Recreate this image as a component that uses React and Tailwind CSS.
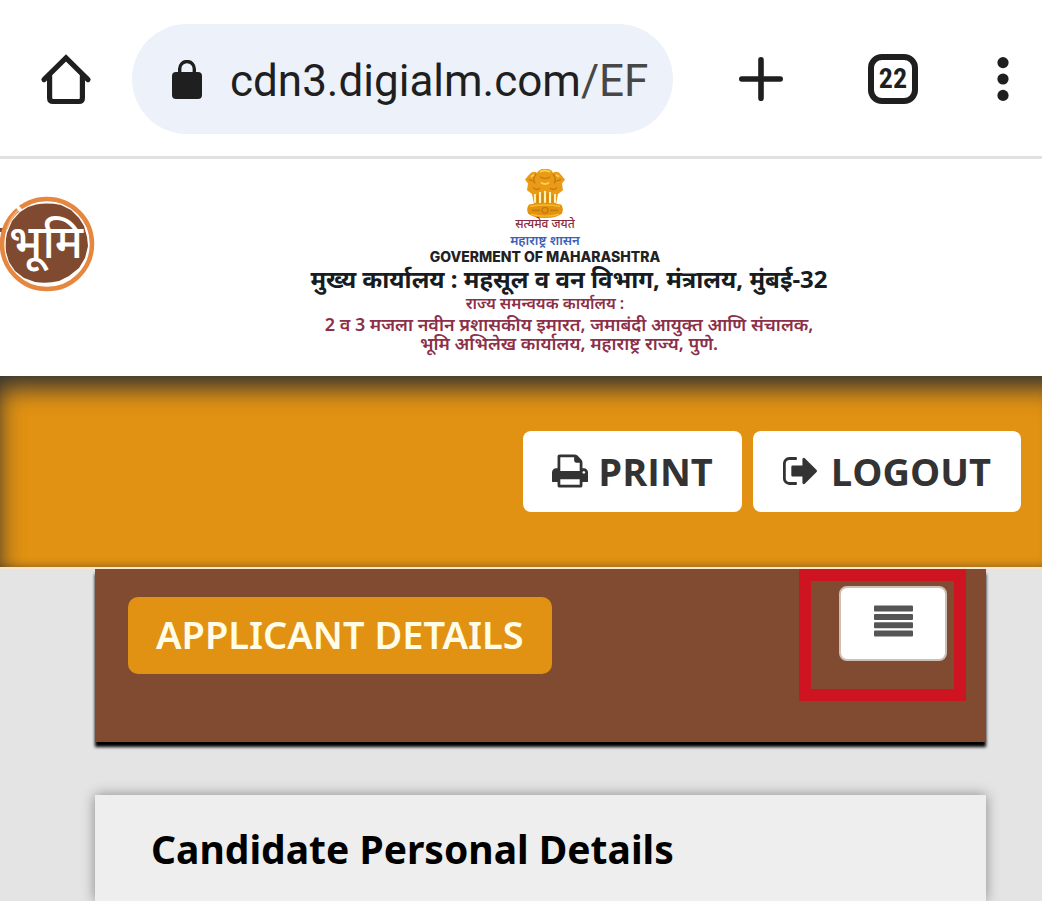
function HomeIcon() {
  return (
    <svg viewBox="0 0 52 52" className="size-13" fill="none" stroke="#1f1f1f" strokeWidth="5.2" strokeLinecap="round" strokeLinejoin="miter" aria-hidden="true">
      <path d="M4 26.600 26 5l22 21.600" />
      <path d="M9.600 23v22q0 3.500 3.500 3.500h25.800q3.500 0 3.500-3.500V23" />
    </svg>
  );
}

function LockIcon() {
  return (
    <svg viewBox="0 0 30 39" className="h-[39px] w-[30px]" aria-hidden="true">
      <rect x="0" y="12" width="30" height="27" rx="4" fill="#1f1f1f" />
      <path d="M7.7 14V8.8a7.3 7.3 0 0 1 14.6 0V14" fill="none" stroke="#1f1f1f" strokeWidth="3.4" />
    </svg>
  );
}

function PlusIcon() {
  return (
    <svg viewBox="0 0 44 44" className="size-11" stroke="#1f1f1f" strokeWidth="5.6" strokeLinecap="round" aria-hidden="true">
      <path d="M22 2.8v38.4M2.8 22h38.4" />
    </svg>
  );
}

function DotsIcon() {
  return (
    <svg viewBox="0 0 12 44" className="h-11 w-3" fill="#1f1f1f" aria-hidden="true">
      <circle cx="6" cy="5.6" r="5.6" />
      <circle cx="6" cy="22" r="5.6" />
      <circle cx="6" cy="38.4" r="5.6" />
    </svg>
  );
}

function PrintIcon() {
  return (
    <svg viewBox="0 128 1664 1536" className="h-[34px] w-9" fill="currentColor" aria-hidden="true">
      <path d="M384 1536h896v-256h-896v256zM384 896h896v-384h-160q-40 0-68-28t-28-68v-160h-640v640zM1536 960q0-26-19-45t-45-19-45 19-19 45 19 45 45 19 45-19 19-45zM1664 960v416q0 13-9.5 22.5t-22.5 9.5h-224v160q0 40-28 68t-68 28h-960q-40 0-68-28t-28-68v-160h-224q-13 0-22.5-9.5t-9.5-22.5v-416q0-79 56.5-135.5t135.5-56.5h64v-544q0-40 28-68t68-28h672q40 0 88 20t76 48l152 152q28 28 48 76t20 88v256h64q79 0 135.5 56.5t56.5 135.5z" />
    </svg>
  );
}

function LogoutIcon() {
  return (
    <svg viewBox="0 256 1568 1280" className="h-7 w-[34px]" fill="currentColor" aria-hidden="true">
      <path d="M640 1440q0 4 1 20t.5 26.5-3 23.5-10 19.5-20.5 6.5h-320q-119 0-203.5-84.5t-84.5-203.5v-704q0-119 84.5-203.5t203.5-84.5h320q13 0 22.5 9.5t9.5 22.5q0 4 1 20t.5 26.5-3 23.5-10 19.5-20.5 6.5h-320q-66 0-113 47t-47 113v704q0 66 47 113t113 47h312l11.5 1 11.5 3 8 5.5 7 9 2 13.5zM1568 896q0 26-19 45l-544 544q-19 19-45 19t-45-19-19-45v-288h-448q-26 0-45-19t-19-45v-384q0-26 19-45t45-19h448v-288q0-26 19-45t45-19 45 19l544 544q19 19 19 45z" />
    </svg>
  );
}

function MenuIcon() {
  return (
    <svg viewBox="0 0 39 32" className="h-8 w-[39px]" fill="#555" aria-hidden="true">
      <rect y="0.5" width="39" height="6" rx="1" />
      <rect y="9" width="39" height="6" rx="1" />
      <rect y="17.3" width="39" height="6" rx="1" />
      <rect y="25.5" width="39" height="6" rx="1" />
    </svg>
  );
}

function BhumiLogo() {
  return (
    <div className="grid w-24 grid-cols-1 grid-rows-1 items-center justify-items-center">
      <svg viewBox="0 0 96 98" className="col-start-1 row-start-1 h-[98px] w-24" aria-hidden="true">
        <path d="M0 33h5v4H0z" fill="#804a30" />
        <circle cx="47" cy="49" r="45" fill="#fff" stroke="#e5873f" strokeWidth="4.500" />
        <path d="M7 34Q12 19 20 14" stroke="#f3b27c" strokeWidth="1.500" fill="none" />
        <path d="m15 9 8 9" stroke="#fff" strokeWidth="3.500" />
        <path d="M36 9.500q12-2 25 .5l10 5 8 8 5 8 3 11 1 9-3 12-6 10-10 8-10 5q-12 3-24 1l-11-4-9-7-6-9-3-10q-1-11 1-19l5-12 8-9 8-5Z" fill="#804a30" />
      </svg>
      <span className="col-start-1 row-start-1 pr-1 pb-2 font-['Noto_Sans','Noto_Sans_Devanagari',sans-serif] text-[46px] leading-none font-medium text-white">भूमि</span>
    </div>
  );
}

function Emblem() {
  return (
    <svg viewBox="0 0 42 52" className="h-[50px] w-[42px]" preserveAspectRatio="none" aria-hidden="true">
      <path d="M5 6Q9 1 13 4q3-5 8-4 6-1 8 4 5-3 8 2l4 5-3 4 1 7-5 4-2 11H10L8 26l-5-4 1-7-3-4Z" fill="#e99a16" />
      <path d="M12 5q-4 6-1 10m18-10q4 6 1 10M16 8q5 4 10 0M5 11l6 2m20 0 6-2M9 19q3 4 7 1m10 0q4 3 7-1" fill="none" stroke="#c67a10" strokeWidth="1.300" />
      <path d="M16 3q5-3 10 0M7 8l3-2m22 0 3 2M17 14q4 3 8 0" fill="none" stroke="#ffcf45" strokeWidth="2" />
      <path d="M11 26v9m5-11v12m5-13v13m5-12v12m5-10v9" stroke="#fff2b5" strokeWidth="2" />
      <path d="M13.500 27v9m5-11v11m5-11v11m5-9v9" stroke="#d08a1b" strokeWidth="1.500" />
      <path d="M5 37q16-4 32 0 3 4 1 9-4 5-17 5T4 46q-2-5 1-9Z" fill="#e3930d" />
      <path d="M6 39q15-3 30 0M7 47q14 4 28 0" fill="none" stroke="#f6b930" strokeWidth="1.500" />
      <circle cx="21" cy="43" r="3" fill="none" stroke="#bd7714" strokeWidth="1.200" />
      <path d="M8 43h8m10 0h8" stroke="#c67d14" strokeWidth="2" />
    </svg>
  );
}

export default function App() {
  return (
    <div className="flex min-h-screen flex-col bg-[#e4e4e4] font-['Open_Sans','Noto_Sans',sans-serif]">
      <header className="flex h-[159px] items-center border-b-3 border-[#e0e2e0] bg-white pt-0.5 pr-[33px] pl-10">
        <button type="button" aria-label="Home" className="shrink-0"><HomeIcon /></button>
        <div className="ml-10 flex h-[110px] min-w-0 flex-1 items-center overflow-hidden rounded-full bg-[#ecf1fa] pr-5 pl-10">
          <LockIcon />
          <span className="ml-7 pt-1 font-[Roboto,sans-serif] text-[44px] leading-none whitespace-nowrap text-[#1f1f1f]">
            cdn3.digialm.com<span className="text-[#474747]">/EF</span>
          </span>
        </div>
        <button type="button" aria-label="New tab" className="ml-[66px] shrink-0"><PlusIcon /></button>
        <button type="button" aria-label="Open tabs" className="ml-[85px] flex size-[50px] shrink-0 items-center justify-center rounded-[14px] border-6 border-[#1f1f1f] font-['Liberation_Sans_Narrow','Roboto_Condensed',Roboto,sans-serif] text-[28px] leading-none font-bold text-[#1f1f1f]">22</button>
        <button type="button" aria-label="More options" className="ml-[79px] shrink-0"><DotsIcon /></button>
      </header>

      <section className="flex h-[217px] items-start bg-white">
        <div className="mt-9"><BhumiLogo /></div>
        <div className="flex min-w-0 flex-1 flex-col items-center pt-2.5 font-['Noto_Sans','Noto_Sans_Devanagari',sans-serif] whitespace-nowrap">
          <div className="flex flex-col items-center pr-12">
            <Emblem />
            <p className="text-[12px] leading-[10px] font-medium text-[#8b2942]">सत्यमेव जयते</p>
            <p className="pt-1.5 text-[13px] leading-[10px] font-semibold text-[#3a62b5]">महाराष्ट्र शासन</p>
            <h1 className="pt-1.5 font-[Inter,sans-serif] text-[14px] leading-[12px] font-extrabold text-[#222]">GOVERMENT OF MAHARASHTRA</h1>
          </div>
          <p className="text-[24px] leading-[32px] font-bold text-[#161c22]">मुख्य कार्यालय : महसूल व वन विभाग, मंत्रालय, मुंबई-32</p>
          <p className="pr-12 text-[16px] leading-[16px] font-semibold text-[#8b3048]">राज्य समन्वयक कार्यालय :</p>
          <p className="pt-1 text-[18px] leading-[18px] font-semibold text-[#8b3048]">2 व 3 मजला नवीन प्रशासकीय इमारत, जमाबंदी आयुक्त आणि संचालक,</p>
          <p className="text-[18px] leading-[20px] font-semibold text-[#8b3048]">भूमि अभिलेख कार्यालय, महाराष्ट्र राज्य, पुणे.</p>
        </div>
      </section>

      <nav className="flex h-[191px] items-center justify-end gap-[11px] bg-[#e29212] pr-[21px] text-[38px] leading-none font-bold text-[#333] shadow-[inset_12px_25px_24px_-13px_#333,inset_0_-8px_10px_-8px_#3339]">
        <button type="button" className="flex h-[81px] items-center gap-2.5 rounded-lg bg-white px-[29px] pb-0.5"><PrintIcon />PRINT</button>
        <button type="button" className="flex h-[81px] items-center gap-3.5 rounded-lg bg-white px-[30px] pb-0.5"><LogoutIcon />LOGOUT</button>
      </nav>

      <main className="flex flex-1 flex-col border-t-2 border-[#f8e6ce] pr-14 pl-[95px]">
        <div className="flex h-[173px] shrink-0 items-start justify-between bg-[#804b31] pr-5 pl-[33px] shadow-[0_5px_3px_#000]">
          <button type="button" className="mt-7 h-[77px] rounded-[10px] bg-[#e29212] px-7 pb-1 font-['Noto_Sans',sans-serif] text-[38px] leading-none font-semibold whitespace-nowrap text-[#fffde8]">APPLICANT DETAILS</button>
          <div className="flex h-33 w-[167px] items-start justify-end border-12 border-[#ce1420] pt-[5px] pr-[7px]">
            <button type="button" aria-label="Menu" className="flex h-[75px] w-[108px] items-center justify-center rounded-lg border-2 border-[#ccc0b9] bg-white pb-1.5"><MenuIcon /></button>
          </div>
        </div>
        <section className="mt-[53px] flex-1 bg-[#eee] px-14 pt-8 shadow-[0_0_12px_#888]">
          <h2 className="font-['Noto_Sans',sans-serif] text-[39px] leading-[44px] font-bold text-black">Candidate Personal Details</h2>
        </section>
      </main>
    </div>
  );
}
